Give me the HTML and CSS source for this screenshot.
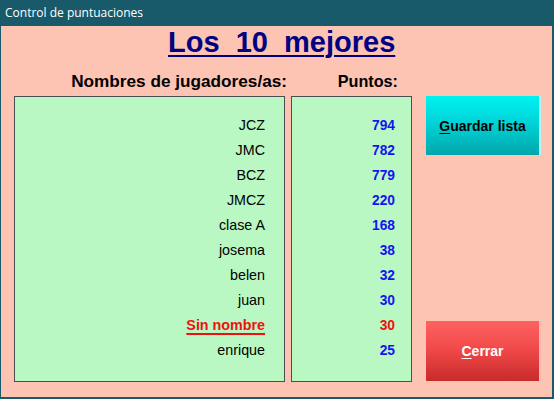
FILE: index.html
```html
<!DOCTYPE html>
<html lang="es">
<head>
<meta charset="utf-8">
<title>Control de puntuaciones</title>
<link rel="stylesheet" href="styles.css">
</head>
<body>
<div class="window">
  <div class="titlebar">Control de puntuaciones</div>
  <div class="content">
    <div class="title-row"><h1 class="title">Los  10  mejores</h1></div>
    <div class="grid">
      <div class="head head-names">Nombres de jugadores/as:</div>
      <div class="head head-points">Puntos:</div>
      <div class="head-empty"></div>
      <div class="box names">
        <div class="row">JCZ</div>
        <div class="row">JMC</div>
        <div class="row">BCZ</div>
        <div class="row">JMCZ</div>
        <div class="row">clase A</div>
        <div class="row">josema</div>
        <div class="row">belen</div>
        <div class="row">juan</div>
        <div class="row current">Sin nombre</div>
        <div class="row">enrique</div>
      </div>
      <div class="box points">
        <div class="row">794</div>
        <div class="row">782</div>
        <div class="row">779</div>
        <div class="row">220</div>
        <div class="row">168</div>
        <div class="row">38</div>
        <div class="row">32</div>
        <div class="row">30</div>
        <div class="row current">30</div>
        <div class="row">25</div>
      </div>
      <div class="buttons">
        <button class="btn btn-save"><u>G</u>uardar lista</button>
        <button class="btn btn-close"><u>C</u>errar</button>
      </div>
    </div>
  </div>
</div>
</body>
</html>
```
FILE: styles.css
```css
html, body {
  margin: 0;
  padding: 0;
  background: #185a6a;
}
.window {
  width: 554px;
  height: 399px;
  box-sizing: border-box;
  background: #185a6a;
  border-left: 1px solid #185a6a;
  border-right: 2px solid #185a6a;
  border-bottom: 2px solid #185a6a;
  display: flex;
  flex-direction: column;
}
.titlebar {
  height: 26px;
  flex: none;
  color: #ffffff;
  font-family: "Open Sans", "Noto Sans", sans-serif;
  font-size: 12px;
  line-height: 26px;
  padding-left: 4px;
  box-sizing: border-box;
}
.content {
  flex: 1;
  background: #fdc3b3;
  padding-left: 13px;
  font-family: "Liberation Sans", Arial, sans-serif;
}
.title-row {
  height: 45px;
  padding-left: 154px;
}
.title {
  margin: 0;
  font-size: 29px;
  line-height: 33px;
  font-weight: bold;
  color: #000080;
  white-space: pre;
  text-decoration: underline;
  text-decoration-thickness: 2px;
  text-underline-offset: 3px;
  display: inline-block;
  padding-top: 0;
}
.grid {
  display: grid;
  grid-template-columns: 271px 121px 123px;
  grid-template-rows: 20px 286px;
  column-gap: 6px;
  row-gap: 5px;
}
.head {
  font-weight: bold;
  line-height: 20px;
  color: #000000;
  text-align: right;
}
.head-names {
  font-size: 17.2px;
  margin-right: -2px;
}
.head-points {
  font-size: 16.2px;
  padding-right: 14px;
}
.box {
  box-sizing: border-box;
  border: 1px solid #4a4e52;
  background: #b9f8c3;
  padding-top: 16px;
  text-align: right;
}
.names {
  padding-right: 19px;
}
.points {
  padding-right: 16px;
}
.row {
  height: 25px;
  line-height: 25px;
  font-size: 14.3px;
  color: #000000;
}
.names .current {
  color: #f01010;
  font-weight: bold;
  text-decoration: underline;
  text-decoration-thickness: 2px;
  text-underline-offset: 3px;
}
.points .row {
  font-size: 13.8px;
  font-weight: bold;
  color: #1414f0;
}
.points .current {
  color: #f01010;
}
.buttons {
  padding-left: 8px;
  display: flex;
  flex-direction: column;
  justify-content: space-between;
  align-items: flex-start;
  padding-bottom: 1px;
}
.btn {
  display: block;
  width: 115px;
  height: 59px;
  margin: 0;
  padding: 0;
  border: none;
  box-sizing: border-box;
  font-family: "Liberation Sans", Arial, sans-serif;
  font-size: 14px;
  font-weight: bold;
  cursor: default;
}
.btn u {
  text-decoration-thickness: 1px;
  text-underline-offset: 2px;
}
.btn-save {
  color: #000000;
  background: linear-gradient(to bottom, #00f2f2 0%, #00d0d4 50%, #00a6aa 100%);
  border-right: 2px solid #b8f4f4;
}
.btn-close {
  height: 60px;
  color: #ffffff;
  background: linear-gradient(to bottom, #ff6262 0%, #f24a4a 45%, #c82a2a 100%);
  border-right: 2px solid #ffb8b0;
}
```
